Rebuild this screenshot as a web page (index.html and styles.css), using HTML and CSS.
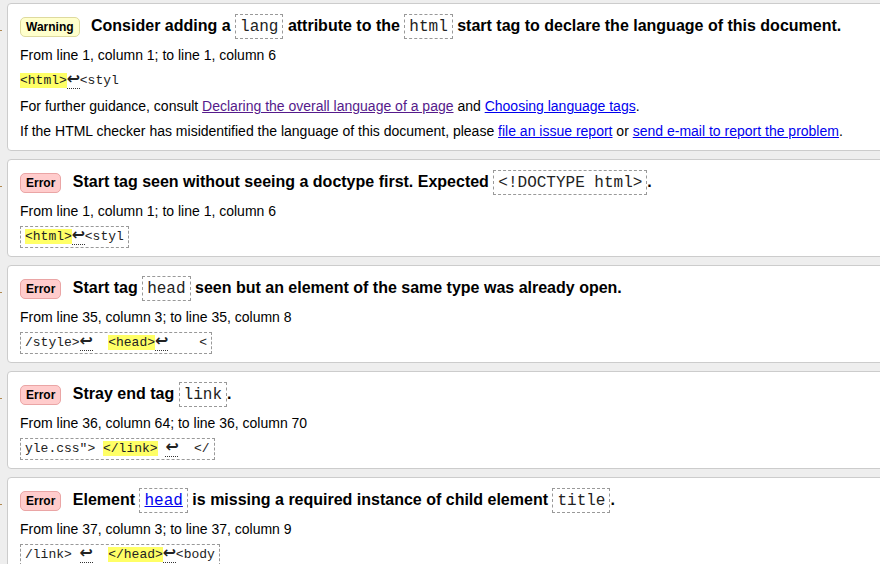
FILE: index.html
```html
<!DOCTYPE html>
<html lang="en">
<head>
<meta charset="utf-8">
<title>Validation messages</title>
<link rel="stylesheet" href="styles.css">
</head>
<body>
<ol class="messages">
  <li class="row">
    <span class="marker"></span>
    <div class="card warning">
      <p class="title"><span class="badge">Warning</span> Consider adding a <code>lang</code> attribute to the <code>html</code> start tag to declare the language of this document.</p>
      <p class="loc">From line 1, column 1; to line 1, column 6</p>
      <p class="extract plain"><code class="ex"><b>&lt;html&gt;</b><span class="lf">↩</span>&lt;styl</code></p>
      <p class="note">For further guidance, consult <a class="visited" href="#">Declaring the overall language of a page</a> and <a href="#">Choosing language tags</a>.</p>
      <p class="note">If the HTML checker has misidentified the language of this document, please <a href="#">file an issue report</a> or <a href="#">send e-mail to report the problem</a>.</p>
    </div>
  </li>
  <li class="row">
    <span class="marker"></span>
    <div class="card error">
      <p class="title"><span class="badge">Error</span> Start tag seen without seeing a doctype first. Expected <code>&lt;!DOCTYPE html&gt;</code>.</p>
      <p class="loc">From line 1, column 1; to line 1, column 6</p>
      <p class="extract"><code class="ex"><b>&lt;html&gt;</b><span class="lf">↩</span>&lt;styl</code></p>
    </div>
  </li>
  <li class="row">
    <span class="marker"></span>
    <div class="card error">
      <p class="title"><span class="badge">Error</span> Start tag <code>head</code> seen but an element of the same type was already open.</p>
      <p class="loc">From line 35, column 3; to line 35, column 8</p>
      <p class="extract"><code class="ex">/style&gt;<span class="lf">↩</span>  <b>&lt;head&gt;</b><span class="lf">↩</span>    &lt;</code></p>
    </div>
  </li>
  <li class="row">
    <span class="marker"></span>
    <div class="card error">
      <p class="title"><span class="badge">Error</span> Stray end tag <code>link</code>.</p>
      <p class="loc">From line 36, column 64; to line 36, column 70</p>
      <p class="extract"><code class="ex">yle.css"&gt; <b>&lt;/link&gt;</b> <span class="lf">↩</span>  &lt;/</code></p>
    </div>
  </li>
  <li class="row">
    <span class="marker"></span>
    <div class="card error">
      <p class="title"><span class="badge">Error</span> Element <code><a href="#">head</a></code> is missing a required instance of child element <code>title</code>.</p>
      <p class="loc">From line 37, column 3; to line 37, column 9</p>
      <p class="extract"><code class="ex">/link&gt; <span class="lf">↩</span>  <b>&lt;/head&gt;</b><span class="lf">↩</span>&lt;body</code></p>
    </div>
  </li>
</ol>
</body>
</html>
```
FILE: styles.css
```css
html, body {
  margin: 0;
  padding: 0;
  overflow: hidden;
}
body {
  width: 880px;
  height: 564px;
  background: #eee;
  font-family: "Liberation Sans", Arial, sans-serif;
  font-size: 14px;
  color: #000;
}
.messages {
  list-style: none;
  margin: 0;
  padding: 3px 0 0 0;
  width: 930px;
  display: flex;
  flex-direction: column;
  gap: 8px;
}
.row {
  display: flex;
}
.marker {
  flex: none;
  width: 7px;
}
.marker::before {
  content: "";
  display: block;
  width: 2px;
  height: 1px;
  margin-top: 27px;
  background: #b08850;
}
.card {
  flex: 1;
  background: #fff;
  border: 1px solid #ccc;
  border-radius: 4px;
  padding: 10px 12px 8px 12px;
}
.title {
  margin: 0;
  font-size: 16px;
  font-weight: bold;
  line-height: 24px;
  white-space: nowrap;
}
.badge {
  display: inline-block;
  vertical-align: middle;
  font-size: 12px;
  line-height: 14px;
  padding: 2px 5px;
  border: 1px solid;
  border-radius: 5px;
  margin-right: 7px;
}
.warning .badge {
  background: #ffffcc;
  border-color: #deda9e;
}
.error .badge {
  background: #ffcccc;
  border-color: #eaa5a5;
}
.title code {
  font-family: "Liberation Mono", "Courier New", monospace;
  font-size: 16px;
  line-height: 16px;
  font-weight: normal;
  color: #222;
  border: 1px dashed #999;
  padding: 3px 4px 2px;
}
.loc {
  margin: 8px 0 0;
  line-height: 18px;
}
.extract {
  margin: 6px 0 0;
}
.ex {
  display: inline-block;
  height: 16px;
  padding: 2px 4px;
  border: 1px dashed #999;
  font-family: "Liberation Mono", "Courier New", monospace;
  font-size: 13px;
  line-height: 16px;
  white-space: pre;
  color: #222;
}
.plain .ex {
  border-color: transparent;
  border-left: 0;
  padding-left: 0;
}
.ex b {
  font-weight: normal;
  background: #ffff66;
}
.lf {
  display: inline-block;
  width: 13px;
  text-align: center;
  font-family: "DejaVu Sans", sans-serif;
  font-size: 16px;
  font-weight: bold;
  line-height: 12px;
  padding-bottom: 3px;
  border-bottom: 1px dotted #333;
  color: #222;
}
.note {
  margin: 5px 0 0;
  line-height: 18px;
}
.note + .note {
  margin-top: 7px;
}
.note:last-child {
  margin-bottom: 2px;
}
a {
  color: #0000ee;
}
a.visited {
  color: #551a8b;
}
```
